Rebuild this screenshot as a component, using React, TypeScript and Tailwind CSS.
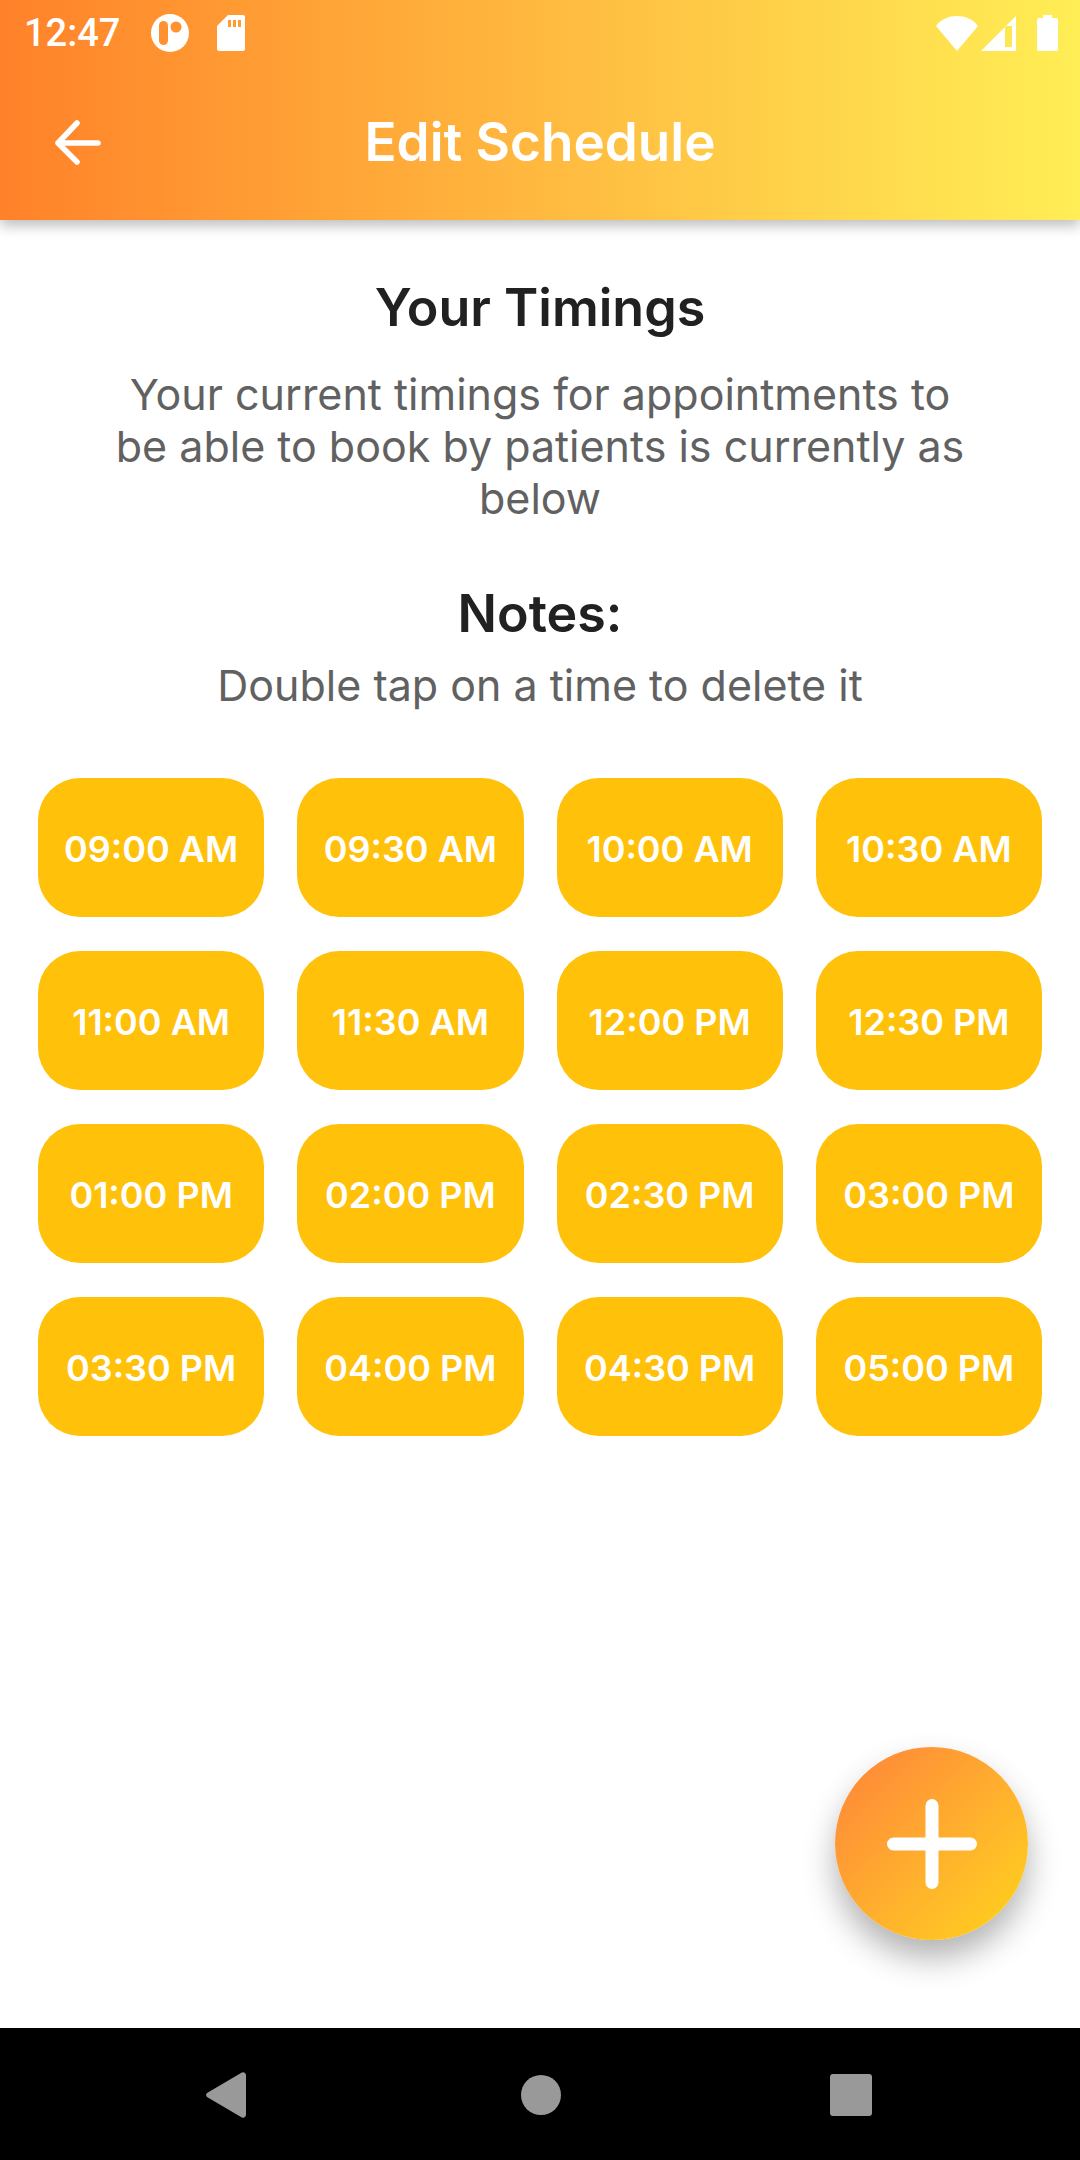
const times = ["09:00 AM","09:30 AM","10:00 AM","10:30 AM","11:00 AM","11:30 AM","12:00 PM","12:30 PM","01:00 PM","02:00 PM","02:30 PM","03:00 PM","03:30 PM","04:00 PM","04:30 PM","05:00 PM"];

export default function App() {
  return (
    <div className="relative flex h-[2160px] w-[1080px] flex-col overflow-hidden bg-white font-['Inter',sans-serif]">
      <header className="z-10 flex h-[220px] shrink-0 flex-col bg-gradient-to-r from-[#ff8129] to-[#ffee55] shadow-[0_6px_12px_rgba(0,0,0,0.25)]">
        <div className="flex h-[66px] items-center pl-[24px] pr-[22px] text-white">
          <span className="font-['Roboto',sans-serif] text-[38px] font-medium leading-none">12:47</span>
          <svg className="ml-[31px]" width="38" height="38" viewBox="0 0 38 38">
            <circle cx="19" cy="19" r="19" fill="#fff" />
            <rect x="8" y="7" width="9" height="24" rx="4.5" fill="#ff9130" />
            <circle cx="25" cy="13" r="5.5" fill="#ff9130" />
          </svg>
          <svg className="ml-[28px]" width="28" height="36" viewBox="0 0 28 36">
            <path d="M11 0h15a2 2 0 0 1 2 2v32a2 2 0 0 1-2 2H2a2 2 0 0 1-2-2V11z" fill="#fff" />
            <path d="M11 5h3v7h-3zM16 5h3v7h-3zM21 5h3v7h-3z" fill="#ff9d33" />
          </svg>
          <div className="flex-1" />
          <svg width="42" height="35" viewBox="0 0 42 35">
            <path d="M0 10C5 3 13 0 21 0s16 3 21 10L21 35z" fill="#fff" />
          </svg>
          <svg className="ml-[3px]" width="36" height="35" viewBox="0 0 36 35">
            <path d="M35 0v35H0zM24 10v21h7V10z" fillRule="evenodd" fill="#fff" />
          </svg>
          <svg className="ml-[20px]" width="21" height="36" viewBox="0 0 21 36">
            <path d="M6 0h9v3h4a2 2 0 0 1 2 2v29a2 2 0 0 1-2 2H2a2 2 0 0 1-2-2V5a2 2 0 0 1 2-2h4z" fill="#fff" />
          </svg>
        </div>
        <div className="relative flex flex-1 items-center justify-center pb-[2px]">
          <svg className="absolute left-[54px] top-[53px]" width="48" height="48" viewBox="0 0 48 48" fill="none" stroke="#fff" strokeWidth="5.5" strokeLinecap="round" strokeLinejoin="round">
            <path d="M44 24H4M23 4L4 24l19 19" />
          </svg>
          <h1 className="text-[53px] font-semibold leading-none text-white">Edit Schedule</h1>
        </div>
      </header>

      <main className="flex flex-1 flex-col items-center pt-[58px]">
        <h2 className="text-[52px] font-semibold leading-[60px] text-[#212121]">Your Timings</h2>
        <p className="mt-[30px] w-[860px] text-center text-[43px] leading-[52px] text-[#616161]">
          Your current timings for appointments to be able to book by patients is currently as below
        </p>
        <h2 className="mt-[60px] text-[52px] font-semibold leading-[60px] text-[#212121]">Notes:</h2>
        <p className="mt-[15px] text-center text-[43px] leading-[52px] text-[#616161]">Double tap on a time to delete it</p>
        <div className="mt-[67px] grid w-full grid-cols-4 gap-x-[33px] gap-y-[34px] px-[38px]">
          {times.map((t) => (
            <div key={t} className="flex h-[139px] items-center justify-center rounded-[42px] bg-[#ffc10a] pt-[2px] text-[36px] font-semibold text-white">
              {t}
            </div>
          ))}
        </div>
      </main>

      <nav className="relative flex h-[132px] shrink-0 items-center bg-black">
        <svg className="absolute left-[205px] top-[44px]" width="41" height="46" viewBox="0 0 41 46">
          <path d="M2 25a3 3 0 0 1 0-4L36 1a3 3 0 0 1 5 2v40a3 3 0 0 1-5 2z" fill="#999" />
        </svg>
        <div className="absolute left-[521px] top-[47px] h-[40px] w-[40px] rounded-full bg-[#999]" />
        <div className="absolute left-[830px] top-[46px] h-[42px] w-[42px] rounded-[3px] bg-[#999]" />
      </nav>

      <button className="absolute left-[835px] top-[1747px] z-20 flex h-[193px] w-[193px] items-center justify-center rounded-full bg-gradient-to-br from-[#ff8239] to-[#ffd415] shadow-[0_18px_32px_rgba(0,0,0,0.3)]">
        <svg width="90" height="90" viewBox="0 0 90 90" stroke="#fff" strokeWidth="13" strokeLinecap="round">
          <path d="M45 6.5v77M6.5 45h77" />
        </svg>
      </button>
    </div>
  );
}
